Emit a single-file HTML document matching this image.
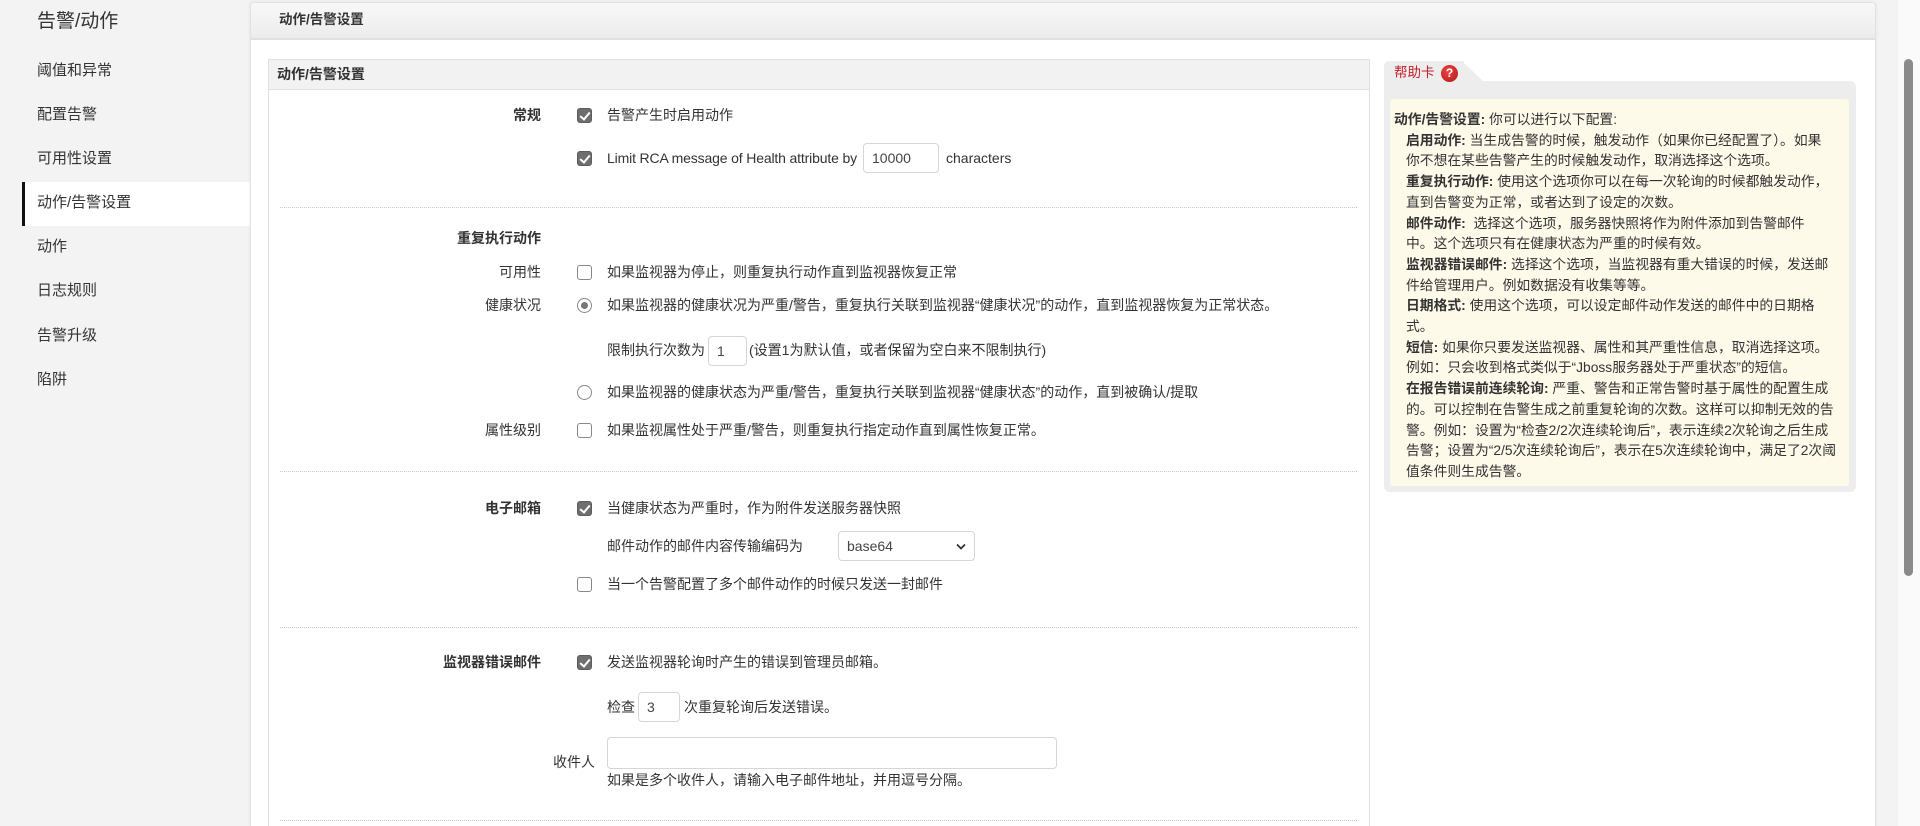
<!DOCTYPE html>
<html><head><meta charset="utf-8">
<style>
*{margin:0;padding:0;box-sizing:border-box}
html{width:1920px;height:826px;overflow:hidden}
body{width:1920px;height:826px;overflow:hidden;background:#f3f3f3;font-family:"Liberation Sans","Noto Sans CJK SC",sans-serif;color:#333;position:relative}
.a{position:absolute;white-space:nowrap}
.side{position:absolute;left:0;top:0;width:250px;height:826px;background:#f3f3f3}
.si{position:absolute;left:37px;font-size:15px;line-height:20px;color:#333}
.sel{position:absolute;left:22px;top:182px;width:228px;height:44px;background:#fff;border-left:3px solid #111}
.main{position:absolute;left:250px;top:2px;width:1626px;height:824px;background:#fff;border:1px solid #e2e2e2;border-bottom:none;border-radius:4px 4px 0 0;box-shadow:0 0 3px rgba(0,0,0,.08)}
.hdr{position:absolute;left:0;top:0;width:100%;height:37px;background:linear-gradient(#f8f8f8,#ececec);border-bottom:2px solid #e0e0e0;border-radius:4px 4px 0 0}
.form{position:absolute;left:268px;top:59px;width:1102px;height:767px;border:1px solid #e0e0e0;border-bottom:none;background:#fff}
.fh{position:absolute;left:0;top:0;width:100%;height:30px;background:#f2f2f2;border-bottom:1px solid #e2e2e2}
.t{font-size:14px;line-height:20px;color:#333}
.b{font-weight:bold}
.lb{position:absolute;font-size:14px;line-height:20px;text-align:right;width:300px;white-space:nowrap}
.cb{position:absolute;width:15px;height:15px;border-radius:3px}
.on{background:#6e6e6e;border:1px solid #5c5c5c}
.off{background:#fff;border:1px solid #888}
.on::after{content:"";position:absolute;left:4px;top:1px;width:4px;height:8px;border:solid #fff;border-width:0 2px 2px 0;transform:rotate(40deg)}
.rd{position:absolute;width:15px;height:15px;border-radius:50%;border:1px solid #888;background:#fff}
.rd.s::after{content:"";position:absolute;left:3px;top:3px;width:7px;height:7px;border-radius:50%;background:#777}
.dl{position:absolute;left:280px;width:1077px;border-top:1px dotted #c8c8c8}
.in{position:absolute;border:1px solid #d6d6d6;border-radius:4px;background:#fff;font-size:14px;color:#444;padding-left:8px;line-height:28px}
.help{position:absolute;left:1384px;top:81px;width:472px;height:411px;background:#ededed;border-radius:0 6px 6px 6px}
.tab{position:absolute;left:1384px;top:61px;width:80px;height:22px;background:#ededed;border-radius:5px 0 0 0}
.tab2{position:absolute;left:1462px;top:61px;width:0;height:0;border-bottom:21px solid #ededed;border-right:22px solid transparent}
.cream{position:absolute;left:1390px;top:99px;width:459px;height:387px;background:#fefaea;border-radius:3px}
.ht{position:absolute;left:1394px;top:110px;font-size:13.8px;line-height:20.7px;color:#333;white-space:nowrap}
.ht div{padding-left:12px}
.ht div.f{padding-left:0}
</style></head><body>
<div class="side">
<div class="a" style="left:37px;top:10px;font-size:19px;line-height:24px;color:#333">告警/动作</div>
<div class="sel"></div>
<div class="si" style="top:61px">阈值和异常</div>
<div class="si" style="top:105px">配置告警</div>
<div class="si" style="top:149px">可用性设置</div>
<div class="si" style="top:193px">动作/告警设置</div>
<div class="si" style="top:237px">动作</div>
<div class="si" style="top:281px">日志规则</div>
<div class="si" style="top:326px">告警升级</div>
<div class="si" style="top:370px">陷阱</div>
</div>
<div class="main"><div class="hdr"></div></div>
<div class="a b" style="left:279px;top:10px;font-size:13.5px;line-height:20px">动作/告警设置</div>
<div class="form"><div class="fh"></div></div>
<div class="a b" style="left:277px;top:64px;font-size:14px;line-height:20px">动作/告警设置</div>

<div class="lb b" style="left:241px;top:105px">常规</div>
<div class="cb on" style="left:577px;top:108px"></div>
<div class="a t" style="left:607px;top:105px">告警产生时启用动作</div>
<div class="cb on" style="left:577px;top:151px"></div>
<div class="a t" style="left:607px;top:148px;letter-spacing:-0.15px">Limit RCA message of Health attribute by</div>
<div class="in" style="left:863px;top:143px;width:76px;height:30px">10000</div>
<div class="a t" style="left:946px;top:148px">characters</div>
<div class="dl" style="top:207px"></div>

<div class="lb b" style="left:241px;top:228px">重复执行动作</div>
<div class="lb" style="left:241px;top:262px">可用性</div>
<div class="cb off" style="left:577px;top:265px"></div>
<div class="a t" style="left:607px;top:262px">如果监视器为停止，则重复执行动作直到监视器恢复正常</div>
<div class="lb" style="left:241px;top:295px">健康状况</div>
<div class="rd s" style="left:577px;top:298px"></div>
<div class="a t" style="left:607px;top:295px">如果监视器的健康状况为严重/警告，重复执行关联到监视器“健康状况”的动作，直到监视器恢复为正常状态。</div>
<div class="a t" style="left:607px;top:340px">限制执行次数为</div>
<div class="in" style="left:708px;top:336px;width:39px;height:30px">1</div>
<div class="a t" style="left:749px;top:340px">(设置1为默认值，或者保留为空白来不限制执行)</div>
<div class="rd" style="left:577px;top:385px"></div>
<div class="a t" style="left:607px;top:382px">如果监视器的健康状态为严重/警告，重复执行关联到监视器“健康状态”的动作，直到被确认/提取</div>
<div class="lb" style="left:241px;top:420px">属性级别</div>
<div class="cb off" style="left:577px;top:423px"></div>
<div class="a t" style="left:607px;top:420px">如果监视属性处于严重/警告，则重复执行指定动作直到属性恢复正常。</div>
<div class="dl" style="top:471px"></div>

<div class="lb b" style="left:241px;top:498px">电子邮箱</div>
<div class="cb on" style="left:577px;top:501px"></div>
<div class="a t" style="left:607px;top:498px">当健康状态为严重时，作为附件发送服务器快照</div>
<div class="a t" style="left:607px;top:536px">邮件动作的邮件内容传输编码为</div>
<div class="in" style="left:838px;top:531px;width:137px;height:30px">base64<svg style="position:absolute;right:8px;top:11px" width="10" height="7" viewBox="0 0 10 7"><path d="M1 1.5L5 5.5L9 1.5" stroke="#333" stroke-width="1.8" fill="none"/></svg></div>
<div class="cb off" style="left:577px;top:577px"></div>
<div class="a t" style="left:607px;top:574px">当一个告警配置了多个邮件动作的时候只发送一封邮件</div>
<div class="dl" style="top:627px"></div>

<div class="lb b" style="left:241px;top:652px">监视器错误邮件</div>
<div class="cb on" style="left:577px;top:655px"></div>
<div class="a t" style="left:607px;top:652px">发送监视器轮询时产生的错误到管理员邮箱。</div>
<div class="a t" style="left:607px;top:697px">检查</div>
<div class="in" style="left:638px;top:692px;width:42px;height:30px">3</div>
<div class="a t" style="left:684px;top:697px">次重复轮询后发送错误。</div>
<div class="lb" style="left:295px;top:752px">收件人</div>
<div class="in" style="left:607px;top:737px;width:450px;height:32px"></div>
<div class="a t" style="left:607px;top:770px">如果是多个收件人，请输入电子邮件地址，并用逗号分隔。</div>
<div class="dl" style="top:820px"></div>

<div class="tab"></div><div class="tab2"></div>
<div class="help"></div>
<div class="a" style="left:1394px;top:63px;font-size:13.5px;line-height:20px;color:#c7202a">帮助卡</div>
<div class="a" style="left:1441px;top:65px;width:17px;height:17px;border-radius:50%;background:radial-gradient(circle at 40% 35%,#e44,#b01818);color:#fff;font-size:12px;font-weight:bold;line-height:17px;text-align:center">?</div>
<div class="cream"></div>
<div class="ht">
<div class="f"><b>动作/告警设置:</b> 你可以进行以下配置:</div>
<div><b>启用动作:</b> 当生成告警的时候，触发动作（如果你已经配置了）。如果</div>
<div>你不想在某些告警产生的时候触发动作，取消选择这个选项。</div>
<div><b>重复执行动作:</b> 使用这个选项你可以在每一次轮询的时候都触发动作，</div>
<div>直到告警变为正常，或者达到了设定的次数。</div>
<div><b>邮件动作:</b> &nbsp;选择这个选项，服务器快照将作为附件添加到告警邮件</div>
<div>中。这个选项只有在健康状态为严重的时候有效。</div>
<div><b>监视器错误邮件:</b> 选择这个选项，当监视器有重大错误的时候，发送邮</div>
<div>件给管理用户。例如数据没有收集等等。</div>
<div><b>日期格式:</b> 使用这个选项，可以设定邮件动作发送的邮件中的日期格</div>
<div>式。</div>
<div><b>短信:</b> 如果你只要发送监视器、属性和其严重性信息，取消选择这项。</div>
<div>例如：只会收到格式类似于“Jboss服务器处于严重状态”的短信。</div>
<div><b>在报告错误前连续轮询:</b> 严重、警告和正常告警时基于属性的配置生成</div>
<div>的。可以控制在告警生成之前重复轮询的次数。这样可以抑制无效的告</div>
<div>警。例如：设置为“检查2/2次连续轮询后”，表示连续2次轮询之后生成</div>
<div>告警；设置为“2/5次连续轮询后”，表示在5次连续轮询中，满足了2次阈</div>
<div>值条件则生成告警。</div>
</div>

<div class="a" style="left:1898px;top:0;width:22px;height:826px;background:#fafafa"></div>
<div class="a" style="left:1904px;top:59px;width:9px;height:517px;background:#8a8a8a;border-radius:5px"></div>
</body></html>
